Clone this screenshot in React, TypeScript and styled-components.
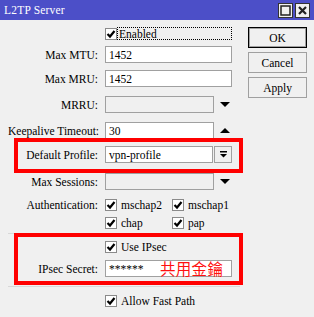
import React from "react";
import styled, { createGlobalStyle } from "styled-components";

const GlobalStyle = createGlobalStyle`
  html, body {
    margin: 0;
    padding: 0;
    background: #f0f0f0;
  }
`;

const Window = styled.div`
  width: 314px;
  height: 317px;
  background: #f0f0f0;
  display: flex;
  flex-direction: column;
  overflow: hidden;
  font-family: "Liberation Serif", "Times New Roman", serif;
  font-size: 11.5px;
  color: #000;
`;

const TitleBar = styled.div`
  height: 20px;
  flex: none;
  background: #4c4fc8;
  display: flex;
  align-items: center;
  padding: 0 4px 0 4px;
  color: #fff;
`;

const Title = styled.span`
  flex: 1;
  font-size: 11.5px;
  letter-spacing: 0.2px;
`;

const TitleButton = styled.div`
  width: 13px;
  height: 13px;
  margin-left: 2px;
  background: #f0f0f0;
  border: 1px solid #333;
  display: flex;
  align-items: center;
  justify-content: center;
`;

const Body = styled.div`
  display: flex;
  padding-top: 7px;
`;

const Form = styled.div`
  width: 232px;
  padding-left: 8px;
  display: flex;
  flex-direction: column;
`;

const Row = styled.div<{ $mt?: number; $h?: number }>`
  position: relative;
  display: flex;
  align-items: center;
  height: ${(p) => p.$h ?? 17}px;
  margin-top: ${(p) => p.$mt ?? 0}px;
`;

const Label = styled.span`
  width: 90px;
  margin-right: 7px;
  text-align: right;
  white-space: nowrap;
`;

const Spacer = styled.span`
  width: 97px;
  flex: none;
`;

const Input = styled.div<{ $w?: number; $disabled?: boolean }>`
  position: relative;
  box-sizing: border-box;
  width: ${(p) => p.$w ?? 127}px;
  height: 17px;
  border: 1px solid #a0a0a0;
  background: ${(p) => (p.$disabled ? "#f0f0f0" : "#fff")};
  padding-left: 3px;
  display: flex;
  align-items: center;
  white-space: nowrap;
`;

const Arrow = styled.div<{ $up?: boolean }>`
  margin-left: 6px;
  width: 0;
  height: 0;
  border-left: 5px solid transparent;
  border-right: 5px solid transparent;
  ${(p) =>
    p.$up ? "border-bottom: 5px solid #000;" : "border-top: 5px solid #000;"}
`;

const DropButton = styled.div`
  box-sizing: border-box;
  width: 18px;
  height: 17px;
  margin-left: 1px;
  border: 1px solid #a0a0a0;
  background: #f0f0f0;
  display: flex;
  align-items: center;
  justify-content: center;
`;

const Box = styled.div`
  box-sizing: border-box;
  width: 12px;
  height: 12px;
  border: 1px solid #8a8a8a;
  background: #fff;
  display: flex;
  align-items: center;
  justify-content: center;
  flex: none;
`;

const CheckItem = styled.div<{ $w?: number }>`
  display: flex;
  align-items: center;
  gap: 4px;
  width: ${(p) => (p.$w ? `${p.$w}px` : "auto")};
`;

const Focus = styled.span`
  box-sizing: border-box;
  width: 115px;
  height: 13px;
  border: 1px dotted #000;
  display: flex;
  align-items: center;
  padding-left: 1px;
`;

const Separator = styled.div<{ $mt: number }>`
  height: 1px;
  margin-top: ${(p) => p.$mt}px;
  background: #d8d8d8;
`;

const Group = styled.div<{ $mt: number }>`
  position: relative;
  margin-top: ${(p) => p.$mt}px;
  display: flex;
  flex-direction: column;
`;

const Highlight = styled.div<{ $top: number; $bottom: number }>`
  position: absolute;
  left: 6px;
  right: -3px;
  top: ${(p) => -p.$top}px;
  bottom: ${(p) => -p.$bottom}px;
  border: 4px solid #ff0000;
  pointer-events: none;
`;

const Note = styled.span`
  position: absolute;
  left: 54px;
  top: -1px;
  font-family: "Noto Sans CJK TC", "Noto Sans CJK SC", sans-serif;
  font-size: 15.5px;
  line-height: 17px;
  color: #ff1010;
  letter-spacing: 0.3px;
`;

const Buttons = styled.div`
  margin-left: 8px;
  display: flex;
  flex-direction: column;
  gap: 4px;
`;

const Button = styled.div<{ $default?: boolean }>`
  box-sizing: border-box;
  width: 59px;
  height: 21px;
  border: 1px solid ${(p) => (p.$default ? "#000" : "#a0a0a0")};
  box-shadow: ${(p) => (p.$default ? "inset 0 0 0 1px #a0a0a0" : "none")};
  background: #f0f0f0;
  display: flex;
  align-items: center;
  justify-content: center;
`;

function Check() {
  return (
    <Box>
      <svg width="10" height="10" viewBox="0 0 10 10">
        <path d="M1.5 5 L4 7.5 L8.5 2" fill="none" stroke="#000" strokeWidth="2.2" />
      </svg>
    </Box>
  );
}

function CheckLabel({ text, w }: { text: string; w?: number }) {
  return (
    <CheckItem $w={w}>
      <Check />
      <span>{text}</span>
    </CheckItem>
  );
}

export default function App() {
  return (
    <Window>
      <GlobalStyle />
      <TitleBar>
        <Title>L2TP Server</Title>
        <TitleButton>
          <svg width="11" height="11" viewBox="0 0 11 11">
            <rect x="1" y="1" width="9" height="9" fill="none" stroke="#222" strokeWidth="1.5" />
          </svg>
        </TitleButton>
        <TitleButton>
          <svg width="11" height="11" viewBox="0 0 11 11">
            <path d="M2 2 L9 9 M9 2 L2 9" stroke="#222" strokeWidth="2.2" />
          </svg>
        </TitleButton>
      </TitleBar>
      <Body>
        <Form>
          <Row $h={13}>
            <Spacer />
            <Check />
            <Focus>Enabled</Focus>
          </Row>
          <Row $mt={6}>
            <Label>Max MTU:</Label>
            <Input>1452</Input>
          </Row>
          <Row $mt={7}>
            <Label>Max MRU:</Label>
            <Input>1452</Input>
          </Row>
          <Row $mt={9}>
            <Label>MRRU:</Label>
            <Input $w={109} $disabled />
            <Arrow />
          </Row>
          <Row $mt={9}>
            <Label>Keepalive Timeout:</Label>
            <Input $w={109}>30</Input>
            <Arrow $up />
          </Row>
          <Row $mt={7}>
            <Label>Default Profile:</Label>
            <Input $w={108}>vpn-profile</Input>
            <DropButton>
              <svg width="9" height="9" viewBox="0 0 9 9">
                <rect x="1" y="1" width="7" height="1.5" fill="#000" />
                <path d="M1 4 H8 L4.5 7.5 Z" fill="#000" />
              </svg>
            </DropButton>
            <Highlight $top={8} $bottom={10} />
          </Row>
          <Row $mt={10}>
            <Label>Max Sessions:</Label>
            <Input $w={109} $disabled />
            <Arrow />
          </Row>
          <Row $mt={8} $h={13}>
            <Label>Authentication:</Label>
            <CheckLabel text="mschap2" w={67} />
            <CheckLabel text="mschap1" />
          </Row>
          <Row $mt={5} $h={13}>
            <Spacer />
            <CheckLabel text="chap" w={67} />
            <CheckLabel text="pap" />
          </Row>
          <Separator $mt={4} />
          <Group $mt={6}>
            <Row $h={13}>
              <Spacer />
              <CheckLabel text="Use IPsec" />
            </Row>
            <Row $mt={7}>
              <Label>IPsec Secret:</Label>
              <Input>
                ******
                <Note>共用金鑰</Note>
              </Input>
            </Row>
            <Highlight $top={7} $bottom={8} />
          </Group>
          <Separator $mt={9} />
          <Row $mt={7} $h={13}>
            <Spacer />
            <CheckLabel text="Allow Fast Path" />
          </Row>
        </Form>
        <Buttons>
          <Button $default>OK</Button>
          <Button>Cancel</Button>
          <Button>Apply</Button>
        </Buttons>
      </Body>
    </Window>
  );
}
